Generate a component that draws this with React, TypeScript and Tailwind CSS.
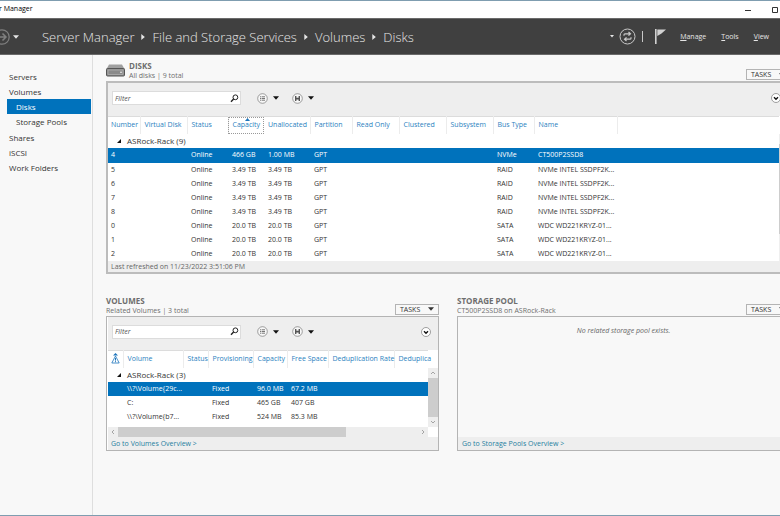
import type { ReactNode } from "react"

const diskColumns = [
  { name: "Number", width: "w-[32px]" },
  { name: "Virtual Disk", width: "w-[47px]" },
  { name: "Status", width: "w-[41px]" },
  { name: "Capacity", width: "w-[36px]" },
  { name: "Unallocated", width: "w-[46px]" },
  { name: "Partition", width: "w-[42px]" },
  { name: "Read Only", width: "w-[47px]" },
  { name: "Clustered", width: "w-[47px]" },
  { name: "Subsystem", width: "w-[47px]" },
  { name: "Bus Type", width: "w-[41px]" },
  { name: "Name", width: "w-[83px]" },
  { name: "", width: "w-auto" },
]

const disks = [
  ["4", "466 GB", "1.00 MB", "NVMe", "CT500P2SSD8"],
  ["5", "3.49 TB", "3.49 TB", "RAID", "NVMe INTEL SSDPF2K..."],
  ["6", "3.49 TB", "3.49 TB", "RAID", "NVMe INTEL SSDPF2K..."],
  ["7", "3.49 TB", "3.49 TB", "RAID", "NVMe INTEL SSDPF2K..."],
  ["8", "3.49 TB", "3.49 TB", "RAID", "NVMe INTEL SSDPF2K..."],
  ["0", "20.0 TB", "20.0 TB", "SATA", "WDC WD221KRYZ-01..."],
  ["1", "20.0 TB", "20.0 TB", "SATA", "WDC WD221KRYZ-01..."],
  ["2", "20.0 TB", "20.0 TB", "SATA", "WDC WD221KRYZ-01..."],
]

const volumeColumns = [
  { name: "Alert", width: "w-[15px]" },
  { name: "Volume", width: "w-[60px]" },
  { name: "Status", width: "w-[25px]" },
  { name: "Provisioning", width: "w-[45px]" },
  { name: "Capacity", width: "w-[34px]" },
  { name: "Free Space", width: "w-[41px]" },
  { name: "Deduplication Rate", width: "w-[66px]" },
  { name: "Deduplica", width: "w-auto" },
]

const volumes = [
  ["\\\\?\\Volume{29c...", "Fixed", "96.0 MB", "67.2 MB"],
  ["C:", "Fixed", "465 GB", "407 GB"],
  ["\\\\?\\Volume{b7...", "Fixed", "524 MB", "85.3 MB"],
]

const links = ["Servers", "Volumes", "Disks", "Storage Pools", "Shares", "iSCSI", "Work Folders"]

function Triangle() {
  return (
    <svg width="6" height="4" viewBox="0 0 6 4" fill="currentColor" className="shrink-0">
      <path d="M0 0.3h6L3 3.8z" />
    </svg>
  )
}

function Crumb() {
  return (
    <svg width="4" height="6" viewBox="0 0 4 6" className="shrink-0" fill="#e6e6e6">
      <path d="M0.3 0L3.8 3 0.3 6z" />
    </svg>
  )
}

function Scroller({ d }: { d: string }) {
  return (
    <svg width="10" height="10" viewBox="0 0 10 10" fill="none" stroke="#a4a4a4" className="shrink-0">
      <path d={d} />
    </svg>
  )
}

function TasksButton() {
  return (
    <button className="mb-px flex h-[11px] w-11 items-center justify-between border border-[#b4b4b4] bg-[#f8f8f8] pr-1 pl-1 text-[7px] leading-none text-[#333]">
      TASKS
      <Triangle />
    </button>
  )
}

function PanelTitle({ title, sub, icon }: { title: string; sub: string; icon?: ReactNode }) {
  return (
    <div className="flex items-end justify-between">
      <div className="flex items-center gap-1">
        {icon}
        <div className="whitespace-nowrap text-[#6e6e6e]">
          <h2 className="text-[8px] leading-[11px] font-bold">{title}</h2>
          <p className="text-[7px] leading-[10px]">{sub}</p>
        </div>
      </div>
      <TasksButton />
    </div>
  )
}

function FilterBar({ id }: { id: string }) {
  return (
    <div className="flex h-[33px] items-center bg-[#eeeeee] pr-[7px] pb-[3px] pl-1 text-[#111]">
      <div className="flex h-[14px] w-[129px] items-center border border-[#dcdcdc] bg-white pr-px">
        <input
          id={id}
          aria-label="Filter"
          placeholder="Filter"
          className="min-w-0 flex-1 pl-0.5 text-[7px] leading-none italic outline-none placeholder:text-[#555]"
        />
        <svg width="9" height="9" viewBox="0 0 9 9" fill="none" stroke="#222">
          <circle cx="5.4" cy="3.3" r="2.4" />
          <path d="M3.6 5L1 7.8" strokeWidth="1.4" />
        </svg>
      </div>
      <button aria-label="Saved criteria" className="ml-4 flex items-center gap-[5px]">
        <svg width="11" height="11" viewBox="0 0 11 11" fill="none" stroke="#777">
          <circle cx="5.5" cy="5.5" r="4.8" fill="#f8f8f8" strokeWidth="0.7" />
          <path d="M3 3.8h1M3 5.5h1M3 7.2h1M4.6 3.8H8M4.6 5.5H8M4.6 7.2H8" stroke="#555" strokeWidth="0.8" />
        </svg>
        <Triangle />
      </button>
      <button aria-label="Save query" className="ml-[13px] flex items-center gap-[5px]">
        <svg width="11" height="11" viewBox="0 0 11 11" fill="none" stroke="#777">
          <circle cx="5.5" cy="5.5" r="4.8" fill="#f8f8f8" strokeWidth="0.7" />
          <path d="M3 3h5v5H3z" fill="#555" stroke="none" />
          <path d="M4.4 3h2.2v1.700h-2.200zM4.400 6.400h2.200V8h-2.200z" fill="#f4f4f4" stroke="none" />
        </svg>
        <Triangle />
      </button>
      <button aria-label="Expand" className="ml-auto">
        <svg width="10" height="10" viewBox="0 0 10 10" fill="none">
          <circle cx="5" cy="5" r="4.5" fill="#fff" stroke="#888" strokeWidth="0.8" />
          <path d="M3 4.2l2 2 2-2" stroke="#111" strokeWidth="1.4" />
        </svg>
      </button>
    </div>
  )
}

function GroupRow({ label, span }: { label: string; span: number }) {
  return (
    <tr>
      <td colSpan={span} className="p-0 py-px pl-[9px]">
        <div className="flex items-center gap-1.5 text-[8px] leading-[12px]">
          <svg width="4" height="4" viewBox="0 0 4 4" fill="#111">
            <path d="M4 0v4H0z" />
          </svg>
          {label}
        </div>
      </td>
    </tr>
  )
}

function DisksTable() {
  return (
    <table className="w-full table-fixed text-left text-[7px] leading-[12px] whitespace-nowrap">
      <thead>
        <tr className="h-[17px] border-t border-[#dcdcdc] text-[#2b7fc0]">
          {diskColumns.map((c) =>
            c.name === "Capacity" ? (
              <th key={c.name} className={`${c.width} p-0 pb-px pl-1 font-normal outline outline-dotted -outline-offset-1 outline-[#999]`}>
                <div className="relative">
                  <svg width="5" height="3" viewBox="0 0 5 3" fill="#1d75bc" className="absolute -top-px left-3">
                    <path d="M2.5 0L5 3H0z" />
                  </svg>
                  {c.name}
                </div>
              </th>
            ) : (
              <th
                key={c.name}
                className={`${c.width} p-0 pb-px pl-1 font-normal first:pl-[3px] ${c.name ? "border-r border-[#ececec]" : ""}`}
              >
                {c.name}
              </th>
            )
          )}
        </tr>
      </thead>
      <tbody>
        <GroupRow label="ASRock-Rack (9)" span={12} />
        {disks.map(([num, cap, free, bus, name], i) => (
          <tr key={num} className={i === 0 ? "h-[15px] bg-[#0072bc] text-white" : "h-[14px]"}>
            {[num, "", "Online", cap, free, "GPT", "", "", "", bus, name, ""].map((v, j) => (
              <td key={j} className="p-0 pl-1 first:pl-[3px]">{v}</td>
            ))}
          </tr>
        ))}
      </tbody>
    </table>
  )
}

function VolumesTable() {
  return (
    <table className="w-full table-fixed text-left text-[7px] leading-[12px] whitespace-nowrap">
      <thead>
        <tr className="h-[18px] border-t border-[#dcdcdc] text-[#2b7fc0]">
          {volumeColumns.map((c, i) => (
            <th key={c.name} className={`${c.width} border-r border-[#ececec] p-0 pb-px pl-1 font-normal first:pl-[3px] last:border-r-0`}>
              {i === 0 ? (
                <svg width="9" height="11" viewBox="0 0 9 11" fill="none" stroke="#1d75bc" aria-label={c.name}>
                  <path d="M4.5 0L7 2.5H2z" fill="#1d75bc" stroke="none" />
                  <path d="M4.5 3L8.2 10H0.8z" strokeWidth="0.8" />
                  <path d="M4.5 5v2.6M4.5 8.2v1" />
                </svg>
              ) : (
                c.name
              )}
            </th>
          ))}
        </tr>
      </thead>
      <tbody>
        <GroupRow label="ASRock-Rack (3)" span={8} />
        {volumes.map(([name, prov, cap, free], i) => (
          <tr key={name} className={i === 0 ? "h-[14px] bg-[#0072bc] text-white" : "h-[14px]"}>
            {["", name, "", prov, cap, free, "", ""].map((v, j) => (
              <td key={j} className="p-0 pl-1">{v}</td>
            ))}
          </tr>
        ))}
      </tbody>
    </table>
  )
}

export default function App() {
  return (
    <div className="flex min-h-screen flex-col overflow-hidden border-y border-[#7f9db0] bg-[#f8f8f8] font-['Open_Sans','Noto_Sans',sans-serif] text-[#333]">
      <div className="flex h-[17px] items-center justify-between bg-white text-[7px] text-black">
        <span className="-ml-px">r Manager</span>
        <div className="flex items-center gap-5">
          <button aria-label="Minimize">
            <svg width="6" height="6" viewBox="0 0 6 6" stroke="#333">
              <path d="M0 3.5h6" />
            </svg>
          </button>
          <button aria-label="Maximize">
            <svg width="9" height="6" viewBox="0 0 9 6" stroke="#333" fill="none">
              <path d="M1.5 0.5h5v5h-5z" />
            </svg>
          </button>
        </div>
      </div>

      <header className="flex h-[37px] items-center border-y border-[#6a6a6a] bg-[#404040] text-[#e6e6e6]">
        <button aria-label="Forward" className="-ml-1.5">
          <svg width="16" height="16" viewBox="0 0 16 16" fill="none" stroke="#808080">
            <circle cx="8" cy="8" r="7.2" strokeWidth="1.2" />
            <path d="M3 8h9M8.5 4.5L12 8l-3.5 3.5" strokeWidth="1.5" />
          </svg>
        </button>
        <button aria-label="Recent pages" className="ml-[3px]">
          <Triangle />
        </button>
        <nav className="ml-[23px] flex items-center gap-[7px] text-[13px] leading-5 font-light whitespace-nowrap">
          <span>Server Manager</span>
          <Crumb />
          <span>File and Storage Services</span>
          <Crumb />
          <span>Volumes</span>
          <Crumb />
          <span>Disks</span>
        </nav>
        <div className="ml-auto flex items-center pr-[11px] text-[7px]">
          <svg width="4" height="3" viewBox="0 0 4 3" fill="#e6e6e6">
            <path d="M0 0h4L2 2.5z" />
          </svg>
          <button aria-label="Refresh" className="ml-[5px]">
            <svg width="17" height="17" viewBox="0 0 17 17" fill="none" stroke="#c8c8c8">
              <circle cx="8.5" cy="8.5" r="7.5" />
              <path d="M5 7.8V6.800q0-1 1-1h5M9.500 4l2 1.800-2 1.800M12 9.200v1q0 1-1 1H6M7.500 9.400l-2 1.800 2 1.800" strokeWidth="1.2" />
            </svg>
          </button>
          <span className="ml-1.5 h-[11px] w-px bg-[#c8c8c8]" />
          <button aria-label="Notifications" className="ml-3">
            <svg width="11" height="15" viewBox="0 0 11 15" fill="#d2d2d2">
              <path d="M0 0h1.6v15H0zM2.3 0.5H11L6.5 4.5 2.3 7z" />
            </svg>
          </button>
          <button className="ml-[14px] pt-0.5"><u>M</u>anage</button>
          <button className="ml-[15px] pt-0.5"><u>T</u>ools</button>
          <button className="ml-[15px] pt-0.5"><u>V</u>iew</button>
        </div>
      </header>

      <div className="flex flex-1">
        <nav className="w-[93px] shrink-0 border-r border-[#dedede] pt-[14px] pr-px pl-[7px] text-[8px] leading-[15px]">
          {links.map((l) => (
            <a
              key={l}
              href="#"
              className={
                l === "Disks"
                  ? "block bg-[#0072bc] pl-[9px] text-white"
                  : l === "Storage Pools"
                    ? "block pl-[9px] leading-[16px]"
                    : "block pl-0.5"
              }
            >
              {l}
            </a>
          ))}
        </nav>

        {/* the content runs a little past the right edge of the window */}
        <main className="-mr-[10px] min-w-0 flex-1 pt-[5px] pl-[13px]">
          <section>
            <PanelTitle
              title="DISKS"
              sub="All disks | 9 total"
              icon={
                <svg width="19" height="13" viewBox="0 0 19 13">
                  <path d="M3 0.5h13l2.5 4.5H0.5z" fill="#a0a0a0" />
                  <rect x="0.5" y="4.5" width="18" height="7.5" rx="1" fill="#8a8a8a" stroke="#555" />
                  <path d="M2 6h15v4.5H2z" fill="none" stroke="#b8b8b8" strokeWidth="0.6" />
                  <circle cx="15" cy="8.3" r="0.8" fill="#fff" />
                </svg>
              }
            />
            <div className="border-2 border-[#bcbcbc] bg-white">
              <FilterBar id="disk-filter" />
              <div className="flex">
                <div className="min-w-0 flex-1">
                  <DisksTable />
                </div>
                <div className="mt-[18px] w-[9px] bg-[#efefef] pt-2.5">
                  <div className="h-[90px] bg-[#cdcdcd]" />
                </div>
              </div>
              <p className="bg-[#eeeeee] pl-[3px] text-[7px] leading-[11px] text-[#666]">Last refreshed on 11/23/2022 3:51:06 PM</p>
            </div>
          </section>

          <div className="mt-[21px] grid grid-cols-2 gap-[18px]">
            <section className="min-w-0">
              <PanelTitle title="VOLUMES" sub="Related Volumes | 3 total" />
              <div className="border border-[#b4b4b4] bg-white pl-px">
                <FilterBar id="volume-filter" />
                <div className="flex">
                  <div className="min-w-0 flex-1">
                    <VolumesTable />
                    <div className="mt-[3px] flex h-[10px] bg-[#eeeeee]">
                      <Scroller d="M6 3L4 5l2 2" />
                      <div className="w-[228px] bg-[#cdcdcd]" />
                      <span className="flex-1" />
                      <Scroller d="M4 3l2 2-2 2" />
                    </div>
                  </div>
                  <div className="mt-[18px] mb-[10px] flex w-[10px] flex-col bg-[#eeeeee]">
                    <Scroller d="M3 6l2-2 2 2" />
                    <div className="flex-1 bg-[#cdcdcd]" />
                    <Scroller d="M3 4l2 2 2-2" />
                  </div>
                </div>
                <div className="bg-[#eeeeee] pl-[3px] text-[7px] leading-[13px]">
                  <a href="#" className="text-[#1f7f9f]">Go to Volumes Overview &gt;</a>
                </div>
              </div>
            </section>

            <section className="flex min-w-0 flex-col">
              <PanelTitle title="STORAGE POOL" sub="CT500P2SSD8 on ASRock-Rack" />
              <div className="flex flex-1 flex-col border border-[#b4b4b4]">
                <p className="pt-2 text-center text-[7px] leading-[12px] text-[#666] italic">No related storage pool exists.</p>
                <div className="mt-auto bg-[#eeeeee] pl-1 text-[7px] leading-[13px]">
                  <a href="#" className="text-[#1f7f9f]">Go to Storage Pools Overview &gt;</a>
                </div>
              </div>
            </section>
          </div>
        </main>
      </div>
    </div>
  )
}
